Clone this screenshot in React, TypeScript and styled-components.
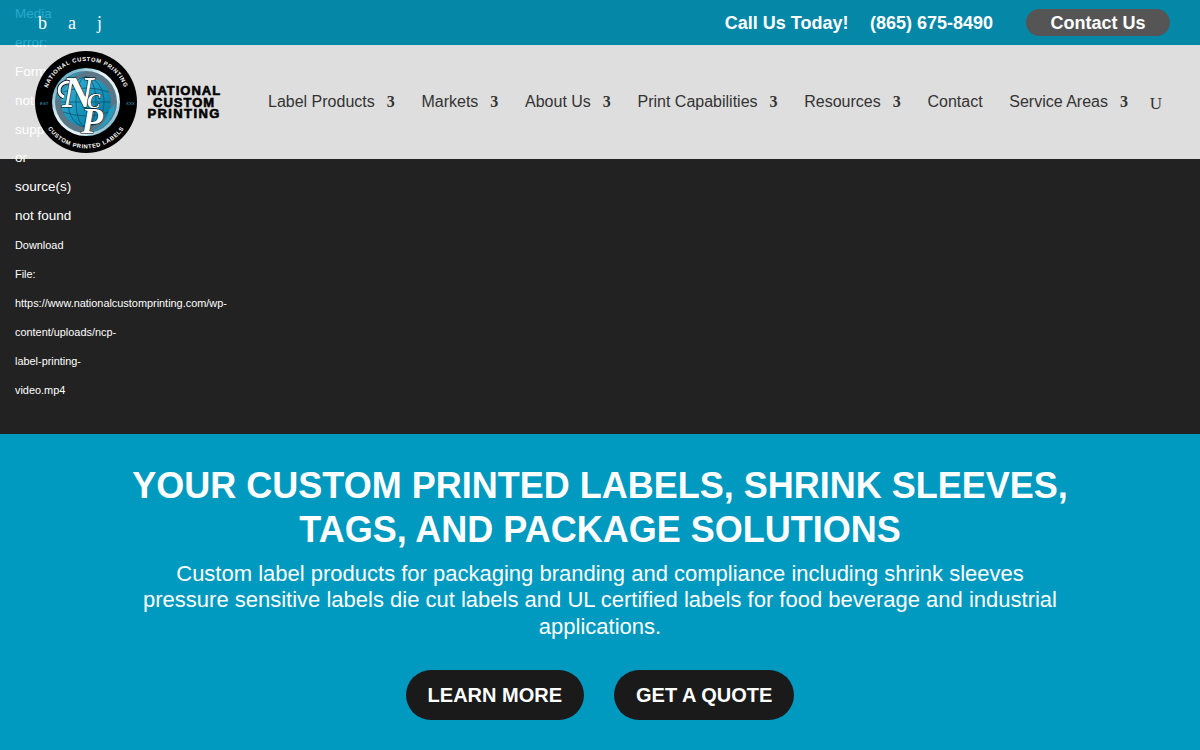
import styled, { createGlobalStyle } from "styled-components";

const navItems = [
  { label: "Label Products", caret: true },
  { label: "Markets", caret: true },
  { label: "About Us", caret: true },
  { label: "Print Capabilities", caret: true },
  { label: "Resources", caret: true },
  { label: "Contact", caret: false },
  { label: "Service Areas", caret: true },
];

const errorLines = ["Media", "error:", "Format(s)", "not", "supported", "or", "source(s)", "not found"];
const downloadLines = [
  "Download",
  "File:",
  "https://www.nationalcustomprinting.com/wp-",
  "content/uploads/ncp-",
  "label-printing-",
  "video.mp4",
];

const Logo = () => (
  <LogoWrap>
    <svg width="104" height="104" viewBox="0 0 104 104">
      <defs>
        <path id="ncpTop" d="M 11 52 A 41 41 0 0 1 93 52" />
        <path id="ncpBottom" d="M 5.5 52 A 46.5 46.5 0 0 0 98.5 52" />
        <linearGradient id="ncpGlobe" x1="0" y1="0" x2="1" y2="1">
          <stop offset="0" stopColor="#3bb4d6" />
          <stop offset="0.55" stopColor="#1494bb" />
          <stop offset="1" stopColor="#0b6f94" />
        </linearGradient>
        <linearGradient id="ncpRing" x1="0" y1="0" x2="1" y2="1">
          <stop offset="0" stopColor="#1d8fb2" />
          <stop offset="0.4" stopColor="#e4f3f7" />
          <stop offset="0.7" stopColor="#e4f3f7" />
          <stop offset="1" stopColor="#1d8fb2" />
        </linearGradient>
      </defs>
      <circle cx="52" cy="52" r="51" fill="#000" />
      <circle cx="52" cy="52" r="34" fill="url(#ncpRing)" />
      <circle cx="52" cy="52" r="31" fill="#5b7686" />
      <circle cx="52" cy="52" r="25" fill="url(#ncpGlobe)" />
      <g fill="none" stroke="#0a3f58" strokeWidth="0.6">
        <ellipse cx="52" cy="52" rx="10" ry="25" />
        <ellipse cx="52" cy="52" rx="18" ry="25" />
        <path d="M29 42 Q52 34 75 42 M27 52 H77 M29 62 Q52 70 75 62" />
      </g>
      <path d="M23 50 A29 29 0 0 1 52 22 A26 26 0 0 0 29 44 Z" fill="#1ea0c6" />
      <path d="M81 54 A29 29 0 0 1 52 82 A26 26 0 0 0 75 60 Z" fill="#1ea0c6" />
      <RingText>
        <textPath href="#ncpTop" startOffset="50%" textAnchor="middle">NATIONAL CUSTOM PRINTING</textPath>
      </RingText>
      <RingText>
        <textPath href="#ncpBottom" startOffset="50%" textAnchor="middle">CUSTOM PRINTED LABELS</textPath>
      </RingText>
      <path d="M30 47 C23 44 24 36 30 33 C37 30 42 35 46 38" fill="none" stroke="#000" strokeWidth="4.5" />
      <path d="M30 47 C23 44 24 36 30 33 C37 30 42 35 46 38" fill="none" stroke="#fff" strokeWidth="3" />
      <g fontFamily="Liberation Serif, serif" fontStyle="italic" fontWeight="700" fill="#fff" stroke="#000" strokeWidth="1" paintOrder="stroke">
        <text x="28" y="57" fontSize="44">N</text>
        <text x="53" y="58" fontSize="20">C</text>
        <text x="47" y="83" fontSize="36">P</text>
      </g>
      <g fontFamily="Liberation Sans, sans-serif" fontSize="4.4" fill="#3fa9c9">
        <text x="6" y="55">EST</text>
        <text x="92" y="55">XXX</text>
      </g>
    </svg>
    <Wordmark>
      <WordLine $spacing={1}>NATIONAL</WordLine>
      <WordLine $spacing={1}>CUSTOM</WordLine>
      <WordLine $spacing={1.4}>PRINTING</WordLine>
    </Wordmark>
  </LogoWrap>
);

const App = () => {
  return (
    <>
      <GlobalStyle />
      <Stage>
        <Player>
          <ErrorBlock>
            {errorLines.map((line) => (
              <ErrorLine key={line}>{line}</ErrorLine>
            ))}
          </ErrorBlock>
          {downloadLines.map((line) => (
            <DownloadLine key={line}>{line}</DownloadLine>
          ))}
        </Player>
        <Header>
          <TopBar>
            <Socials>
              <span>b</span>
              <span>a</span>
              <span>j</span>
            </Socials>
            <CallBlock>
              <span>Call Us Today!</span>
              <span>(865) 675-8490</span>
            </CallBlock>
            <ContactPill>Contact Us</ContactPill>
          </TopBar>
          <NavBar>
            <Logo />
            <Menu>
              {navItems.map((item) => (
                <MenuItem key={item.label}>
                  {item.label}
                  {item.caret && <Caret>3</Caret>}
                </MenuItem>
              ))}
              <SearchGlyph>U</SearchGlyph>
            </Menu>
          </NavBar>
        </Header>
        <Hero>
          <Title>
            YOUR CUSTOM PRINTED LABELS, SHRINK SLEEVES,
            <br />
            TAGS, AND PACKAGE SOLUTIONS
          </Title>
          <Lead>
            Custom label products for packaging branding and compliance including shrink sleeves pressure sensitive
            labels die cut labels and UL certified labels for food beverage and industrial applications.
          </Lead>
          <Actions>
            <HeroButton>LEARN MORE</HeroButton>
            <HeroButton>GET A QUOTE</HeroButton>
          </Actions>
        </Hero>
      </Stage>
    </>
  );
};

export default App;

const GlobalStyle = createGlobalStyle`
  html, body {
    margin: 0;
    padding: 0;
    overflow: hidden;
    font-family: "Liberation Sans", Arial, sans-serif;
  }
`;
const Stage = styled.div`
  position: relative;
  width: 1200px;
  height: 750px;
  overflow: hidden;
  background: #009ac0;
`;
const Player = styled.div`
  height: 434px;
  box-sizing: border-box;
  padding: 0.4px 15px 0;
  background: #222;
  color: #fff;
`;
const ErrorBlock = styled.div`
  padding-bottom: 0.6px;
`;
const ErrorLine = styled.div`
  font-size: 13.5px;
  line-height: 28.8px;
  height: 28.8px;
`;
const DownloadLine = styled.div`
  font-size: 10.9px;
  line-height: 29px;
  height: 29px;
`;
const Header = styled.header`
  position: absolute;
  top: 0;
  left: 0;
  width: 100%;
`;
const TopBar = styled.div`
  height: 45px;
  display: flex;
  align-items: center;
  box-sizing: border-box;
  padding: 0 30px 0 38px;
  background: rgba(0, 153, 191, 0.85);
  color: #fff;
  font-size: 18px;
  font-weight: 700;
`;
const Socials = styled.div`
  display: flex;
  gap: 21px;
  margin: 2px auto 0 0;
  font-family: "Liberation Serif", serif;
  font-size: 18px;
  font-weight: 400;
`;
const CallBlock = styled.div`
  display: flex;
  gap: 21.5px;
  margin-top: 2px;
`;
const ContactPill = styled.a`
  width: 144px;
  height: 27px;
  box-sizing: border-box;
  padding-top: 2px;
  margin-left: 33px;
  border-radius: 14px;
  background: #555;
  display: flex;
  align-items: center;
  justify-content: center;
`;
const NavBar = styled.nav`
  height: 114px;
  display: flex;
  align-items: center;
  box-sizing: border-box;
  padding-left: 34px;
  background: rgba(255, 255, 255, 0.85);
`;
const LogoWrap = styled.div`
  display: flex;
  align-items: center;
  width: 234px;
  gap: 9px;
  flex: none;
`;
const RingText = styled.text`
  font-family: "Liberation Sans", sans-serif;
  font-size: 5.8px;
  font-weight: 700;
  fill: #fff;
  letter-spacing: 0.6px;
`;
const Wordmark = styled.div`
  display: flex;
  flex-direction: column;
  align-items: center;
  margin-top: 1px;
  font-size: 13px;
  line-height: 11.9px;
  font-weight: 700;
  color: #000;
  -webkit-text-stroke: 0.6px #000;
`;
const WordLine = styled.span<{ $spacing: number }>`
  letter-spacing: ${(p) => p.$spacing}px;
`;
const Menu = styled.ul`
  display: flex;
  align-items: center;
  gap: 26.7px;
  list-style: none;
  margin: 0;
  padding: 0;
  color: #333;
  font-size: 16px;
`;
const MenuItem = styled.li`
  display: flex;
  align-items: center;
  gap: 12px;
`;
const Caret = styled.span`
  font-family: "Liberation Serif", serif;
  font-weight: 700;
  font-size: 16px;
`;
const SearchGlyph = styled.span`
  font-family: "Liberation Serif", serif;
  font-size: 17px;
  margin-left: -5px;
  position: relative;
  top: 2px;
`;
const Hero = styled.section`
  height: 316px;
  box-sizing: border-box;
  padding-top: 30px;
  display: flex;
  flex-direction: column;
  align-items: center;
  color: #fff;
  text-align: center;
`;
const Title = styled.h1`
  margin: 0;
  font-size: 36px;
  line-height: 44px;
  font-weight: 700;
`;
const Lead = styled.p`
  margin: 9px 0 0;
  width: 930px;
  font-size: 22px;
  line-height: 26.4px;
`;
const Actions = styled.div`
  display: flex;
  gap: 30px;
  margin-top: 30px;
`;
const HeroButton = styled.a`
  padding: 0 22px;
  height: 50px;
  display: flex;
  align-items: center;
  border-radius: 25px;
  background: #1a1a1a;
  color: #fff;
  font-size: 20px;
  font-weight: 700;
`;
